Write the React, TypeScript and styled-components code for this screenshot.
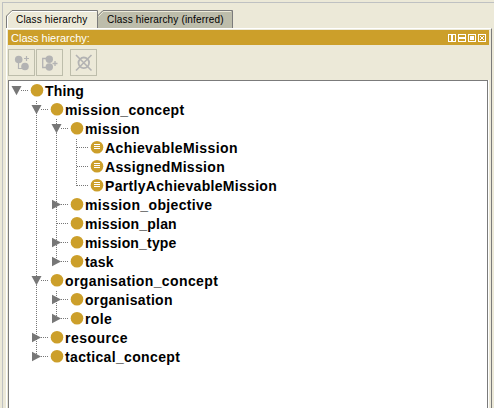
import styled, { createGlobalStyle } from "styled-components";

const GlobalStyle = createGlobalStyle`
    * {
        box-sizing: border-box;
    }
    body {
        margin: 0;
        background-color: #ece9d8;
        font-family: "Liberation Sans", Arial, sans-serif;
        color: black;
        overflow: hidden;
    }
`;

const Wrapper = styled.div`
    width: 494px;
    height: 408px;
    padding: 2px 0 0 2px;
    overflow: hidden;
`;

const Frame = styled.div`
    height: 406px;
    border-top: 1px solid #bfc1c2;
    border-left: 1px solid #bfc1c2;
    padding: 7px 2px 0 3px;
    display: flex;
    flex-direction: column;
`;

const Tabs = styled.div`
    display: flex;
    height: 18px;
    flex-shrink: 0;
`;

const Tab = styled.div<{$width: number}>`
    position: relative;
    width: ${(props) => props.$width}px;
    height: 18px;
    padding-left: 10px;
    line-height: 20px;
    font-size: 10px;
    white-space: nowrap;
`;

const TabShape = styled.svg`
    position: absolute;
    top: 0;
    left: 0;
`;

const Label = styled.span`
    position: relative;
    letter-spacing: 0.17px;
`;

const Panel = styled.div`
    flex: 1;
    width: 486px;
    border-top: 1px solid white;
    border-left: 1px solid white;
    border-right: 1px solid #7b7b7b;
    padding: 1px 2px 0 1px;
    display: flex;
    flex-direction: column;
`;

const TitleBar = styled.div`
    height: 15px;
    flex-shrink: 0;
    padding: 0 3px;
    display: flex;
    align-items: center;
    justify-content: space-between;
    background-color: #cc9f2a;
    color: white;
    font-size: 11px;
`;

const ToolBar = styled.div`
    display: flex;
    gap: 1px;
    padding: 4px 0;
    height: 35px;
    flex-shrink: 0;
`;

const ToolButton = styled.button<{$gap?: boolean}>`
    width: 27px;
    height: 27px;
    padding: 0;
    margin-left: ${(props) => (props.$gap ? 6 : 0)}px;
    border: 1px solid #bdbdab;
    background-color: #ece9d8;
    svg {
        display: block;
    }
`;

const Tree = styled.div`
    flex: 1;
    width: 480px;
    border: 1px solid #7b7b7b;
    border-bottom: none;
    background-color: white;
    box-shadow: 1px 0 0 white;
`;

const Row = styled.div`
    display: flex;
    height: 19px;
`;

const Name = styled.span<{$spacing: number}>`
    font-size: 14px;
    font-weight: bold;
    line-height: 20px;
    letter-spacing: ${(props) => props.$spacing}px;
    white-space: nowrap;
`;

interface INode {
    name: string;
    depth: number;
    state?: "open" | "closed";
    defined?: boolean;
    // columns whose guide passes straight through the row
    through?: number[];
    last?: boolean;
    spacing: number;
}

const nodes: INode[] = [
    { name: "Thing", depth: 0, state: "open", spacing: 0.2 },
    { name: "mission_concept", depth: 1, state: "open", spacing: 0.34 },
    { name: "mission", depth: 2, state: "open", through: [1], spacing: 0.28 },
    { name: "AchievableMission", depth: 3, defined: true, through: [1, 2], spacing: 0.4 },
    { name: "AssignedMission", depth: 3, defined: true, through: [1, 2], spacing: 0.33 },
    { name: "PartlyAchievableMission", depth: 3, defined: true, through: [1, 2], last: true, spacing: 0.31 },
    { name: "mission_objective", depth: 2, state: "closed", through: [1], spacing: 0.35 },
    { name: "mission_plan", depth: 2, through: [1], spacing: 0.2 },
    { name: "mission_type", depth: 2, state: "closed", through: [1], spacing: 0.17 },
    { name: "task", depth: 2, state: "closed", through: [1], last: true, spacing: 0.2 },
    { name: "organisation_concept", depth: 1, state: "open", spacing: 0.39 },
    { name: "organisation", depth: 2, state: "closed", through: [1], spacing: 0.32 },
    { name: "role", depth: 2, state: "closed", through: [1], last: true, spacing: 0.4 },
    { name: "resource", depth: 1, state: "closed", spacing: 0.48 },
    { name: "tactical_concept", depth: 1, state: "closed", last: true, spacing: 0.34 },
];

function Guides({ node, index }: { node: INode; index: number }) {
    const { depth, state, defined, through = [], last } = node;
    const x = depth * 20;
    const dash = { stroke: "#777", strokeDasharray: "1 1" };
    // rows are an odd height, so the dots shift by one on every other row
    const start = index % 2;
    return (
        <svg width={x + 36} height="19" shapeRendering="crispEdges">
            {through.map((column) => (
                <path key={column} d={`M${column * 20 + 7.5} ${start}V19`} {...dash} />
            ))}
            {depth > 0 && <path d={`M${x + 7.5} ${start}V${last ? 10 : 19}`} {...dash} />}
            <path d={`M${state ? x + 12 : x + 8} 9.5H${x + 19}`} {...dash} />
            <g shapeRendering="auto">
                {state === "open" && <path d={`M${x + 2.5} 5H${x + 12.5}L${x + 7.5} 14.2Z`} fill="#777" />}
                {state === "closed" && <path d={`M${x + 3} 4.7V14.3L${x + 12} 9.5Z`} fill="#777" />}
                <circle cx={x + 28} cy="9.2" r="6.3" fill="#cc9f2a" />
                {defined && <path d={`M${x + 25} 6.5h6M${x + 25} 8.5h6M${x + 25} 10.5h6`} stroke="white" />}
            </g>
        </svg>
    );
}

function WindowIcons() {
    return (
        <svg width="38" height="8" shapeRendering="crispEdges" fill="none" stroke="white">
            {[0, 10, 20, 30].map((x) => (
                <rect key={x} x={x + 0.5} y="0.5" width="7" height="7" />
            ))}
            <path d="M4 1V7M11 4H17" strokeWidth="2" />
            <path d="M22 2h4v4h-4z" fill="white" stroke="none" />
            <path d="M32 2h1v1h2v-1h1v1h-1v2h1v1h-1v-1h-2v1h-1v-1h1v-2h-1z" fill="white" stroke="none" />
        </svg>
    );
}

function App() {
    return (
        <Wrapper>
            <GlobalStyle />
            <Frame>
                <Tabs>
                    <Tab $width={91}>
                        <TabShape width="92" height="18" fill="none">
                            <path d="M0.5 18V6L6 0.5H91.5V18" stroke="#7b7b7b" />
                            <path d="M1.5 18V6.5L6.5 1.5H90.5" stroke="white" />
                        </TabShape>
                        <Label>Class hierarchy</Label>
                    </Tab>
                    <Tab $width={136}>
                        <TabShape width="136" height="18">
                            <path d="M0.5 18V6L6 0.5H135.5V18" fill="#bdbdab" stroke="#7b7b7b" />
                            <path d="M1.5 6.5L6.5 1.5H134" fill="none" stroke="#ece9d8" />
                        </TabShape>
                        <Label>Class hierarchy (inferred)</Label>
                    </Tab>
                </Tabs>
                <Panel>
                    <TitleBar>
                        Class hierarchy:
                        <WindowIcons />
                    </TitleBar>
                    <ToolBar>
                        <ToolButton>
                            <svg width="25" height="25" fill="none" stroke="#b3b3b3">
                                <path d="M9.5 12V18.5H14M15 8.5H20M17.5 6V11" strokeWidth="1.2" />
                                <circle cx="9.7" cy="9.5" r="3.8" fill="#b3b3b3" stroke="none" />
                                <circle cx="16" cy="16.5" r="3.8" fill="#b3b3b3" stroke="none" />
                            </svg>
                        </ToolButton>
                        <ToolButton>
                            <svg width="25" height="25" fill="none" stroke="#b3b3b3">
                                <path d="M10 8.5H5.7V17.5H10M15.5 13.5H20.5M18 11V16" strokeWidth="1.3" />
                                <circle cx="12.3" cy="9.3" r="3.7" fill="#b3b3b3" stroke="none" />
                                <circle cx="12.3" cy="17" r="3.7" fill="#b3b3b3" stroke="none" />
                            </svg>
                        </ToolButton>
                        <ToolButton $gap>
                            <svg width="25" height="25" fill="none" stroke="#b3b3b3">
                                <circle cx="12.8" cy="12.8" r="5.3" strokeWidth="1.8" />
                                <path d="M5 5L20.5 20.5M20.5 5L5 20.5" strokeWidth="1.6" />
                            </svg>
                        </ToolButton>
                    </ToolBar>
                    <Tree>
                        {nodes.map((node, index) => (
                            <Row key={node.name}>
                                <Guides node={node} index={index} />
                                <Name $spacing={node.spacing}>{node.name}</Name>
                            </Row>
                        ))}
                    </Tree>
                </Panel>
            </Frame>
        </Wrapper>
    );
}

export default App;
